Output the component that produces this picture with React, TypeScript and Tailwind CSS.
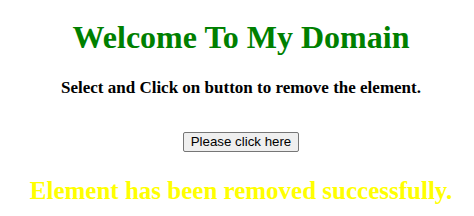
import React from 'react';

export default function App() {
  return (
    <div className="w-[474px] h-[216px] pl-[8px] bg-white text-center font-['Liberation_Serif',serif] overflow-hidden">
      <h1 className="pt-[19px] text-[32px] leading-[36px] font-bold text-[#008000]">Welcome To My Domain</h1>
      <h4 className="mt-[23px] text-[17px] leading-[19px] font-bold text-black">
        Select and Click on button to remove the element.
      </h4>
      <div className="mt-[35px] flex justify-center">
        <button className="h-[20px] px-[7px] bg-[#efefef] border border-[#767676] rounded-[2px] font-['Liberation_Sans',sans-serif] text-[13.3px] leading-[16px] text-black">
          Please click here
        </button>
      </div>
      <p className="mt-[25px] text-[25px] leading-[28px] font-bold text-[#ffff00]">Element has been removed successfully.</p>
    </div>
  );
}
